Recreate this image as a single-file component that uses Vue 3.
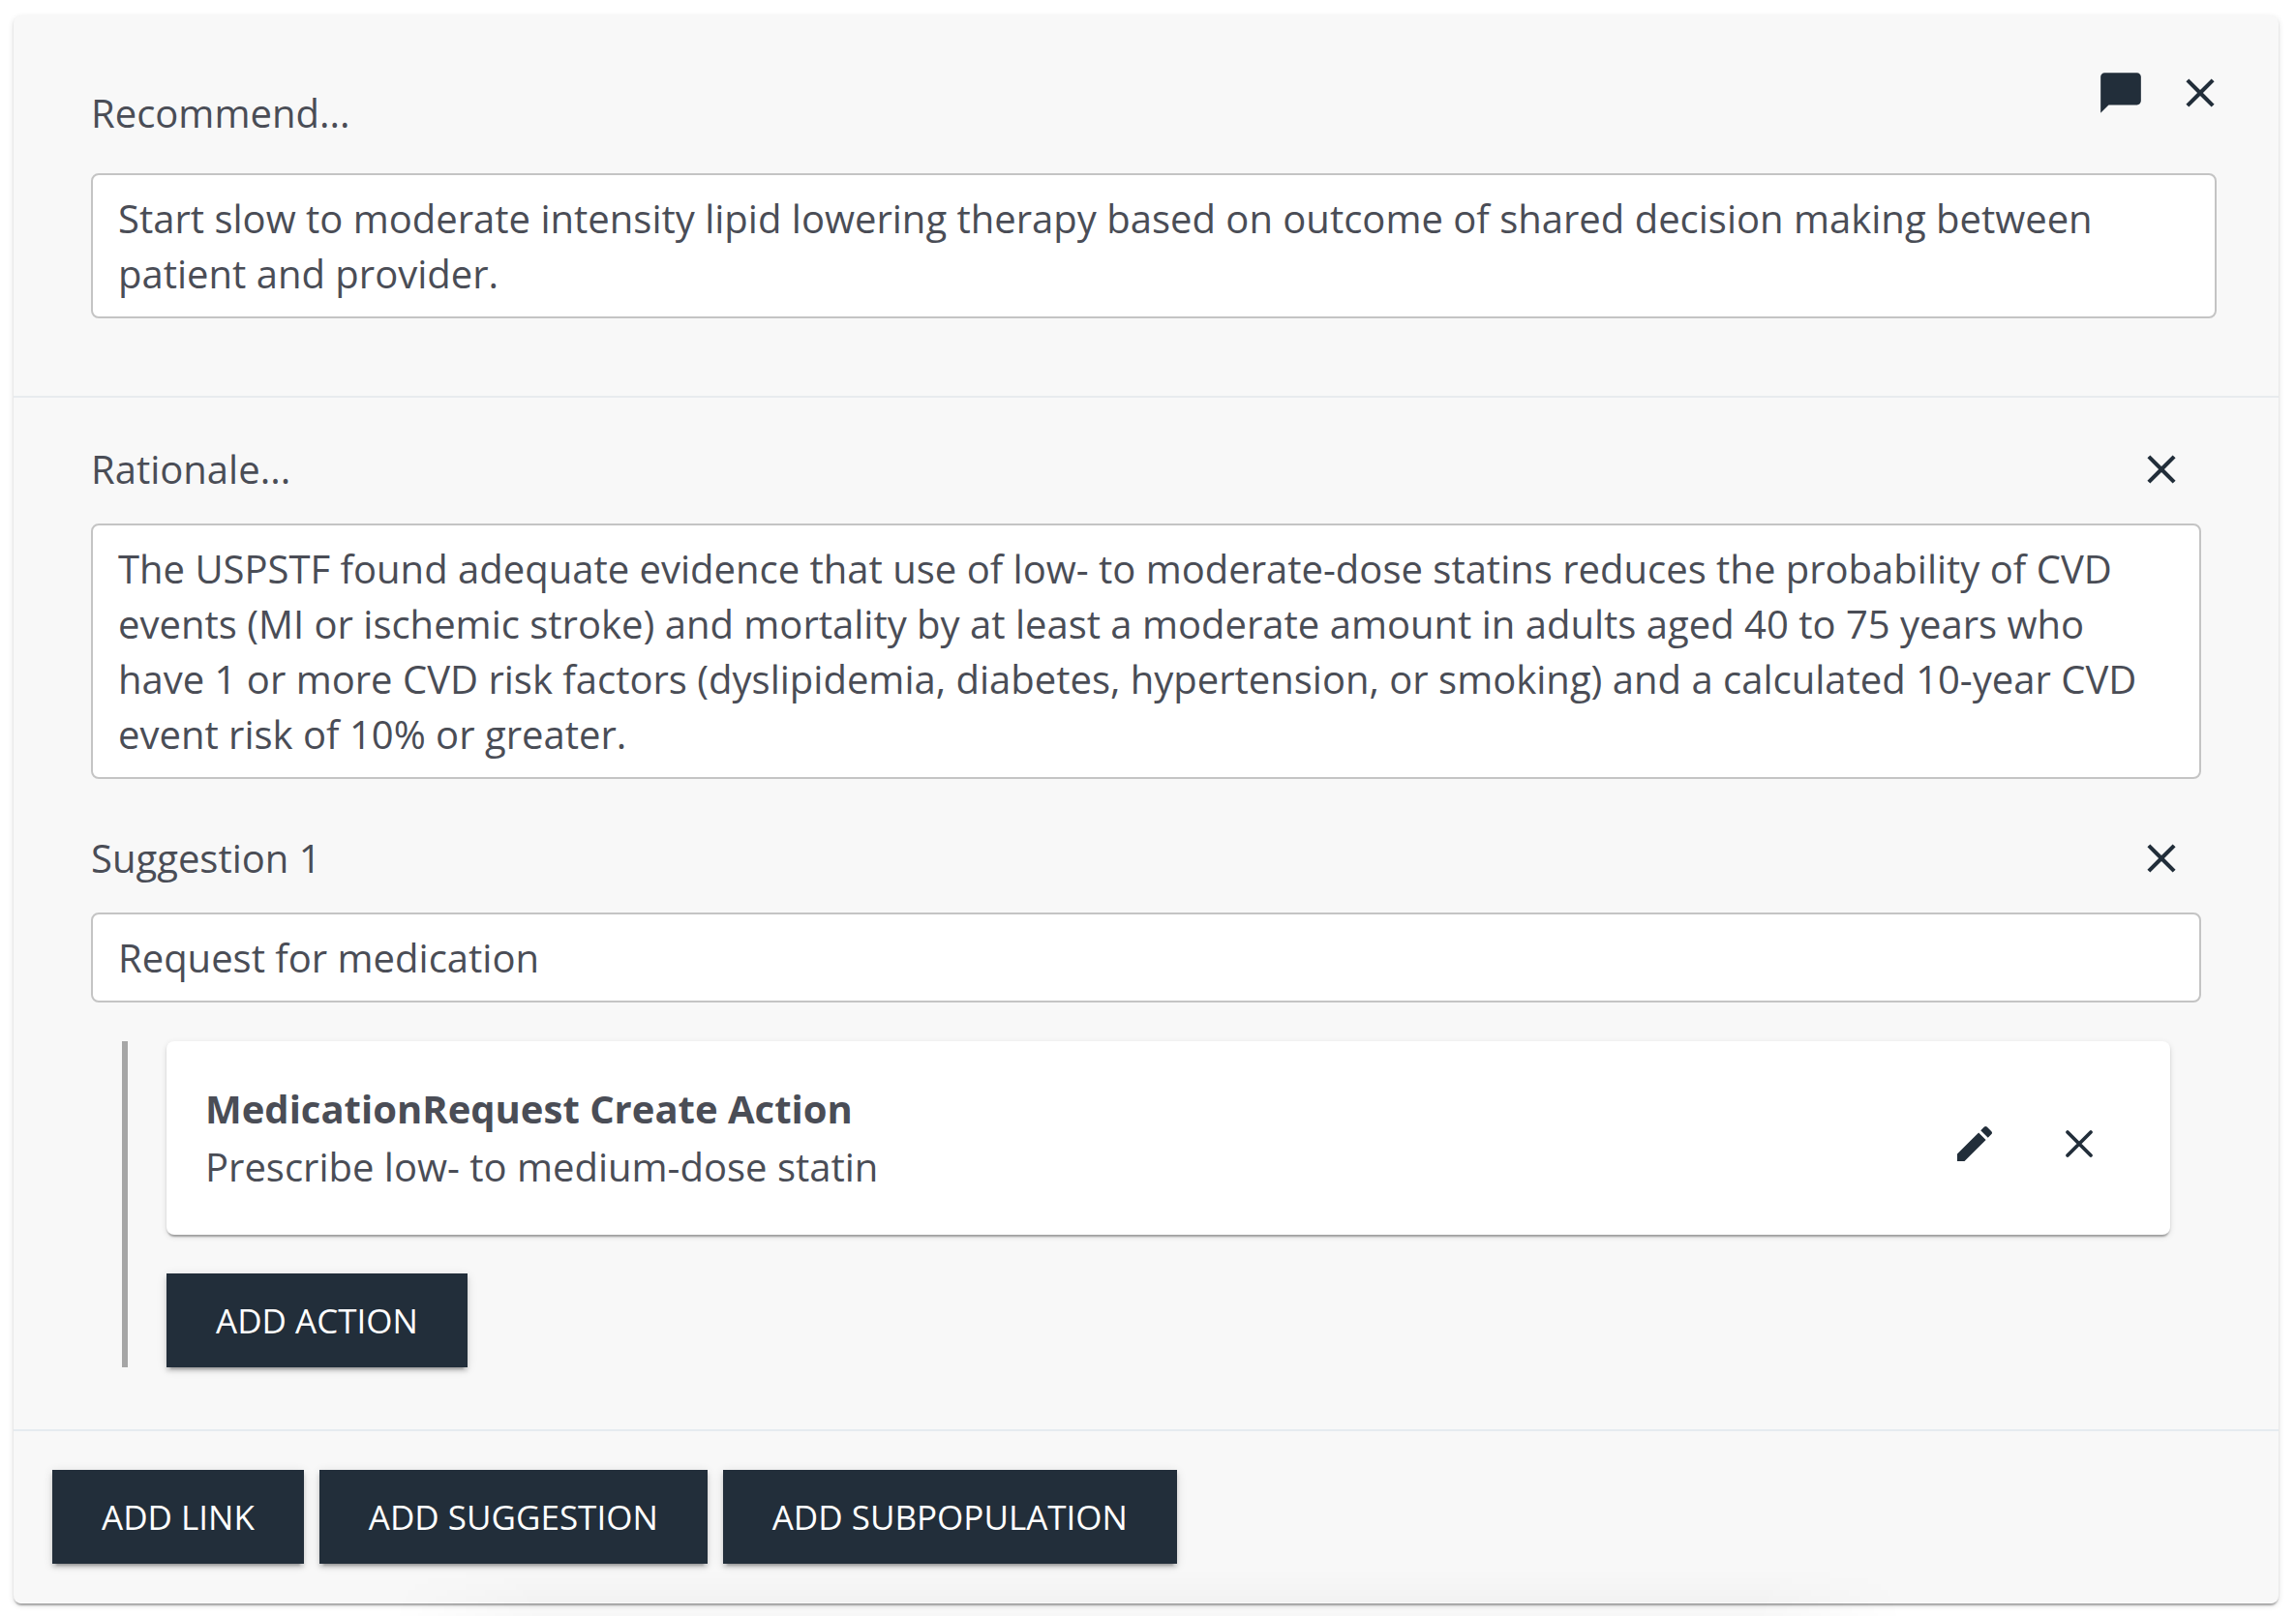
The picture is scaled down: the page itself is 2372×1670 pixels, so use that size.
<script setup>
import { ref } from 'vue'

const recommendation = ref('Start slow to moderate intensity lipid lowering therapy based on outcome of shared decision making between patient and provider.')
const rationale = ref('The USPSTF found adequate evidence that use of low- to moderate-dose statins reduces the probability of CVD events (MI or ischemic stroke) and mortality by at least a moderate amount in adults aged 40 to 75 years who have 1 or more CVD risk factors (dyslipidemia, diabetes, hypertension, or smoking) and a calculated 10-year CVD event risk of 10% or greater.')
const suggestion = ref('Request for medication')
const footerActions = ['Add link', 'Add suggestion', 'Add subpopulation']

const icons = {
  close: 'M19 6.41L17.59 5 12 10.59 6.41 5 5 6.41 10.59 12 5 17.59 6.41 19 12 13.41 17.59 19 19 17.59 13.41 12z',
  comment: 'M20 2H4c-1.1 0-2 .9-2 2v18l4-4h14c1.1 0 2-.9 2-2V4c0-1.1-.9-2-2-2z',
  edit: 'M3 17.25V21h3.75L17.81 9.94l-3.75-3.75L3 17.25zM20.71 7.04c.39-.39.39-1.02 0-1.41l-2.34-2.34c-.39-.39-1.02-.39-1.41 0l-1.83 1.83 3.75 3.75 1.83-1.83z',
}
</script>

<template>
  <main class="page">
    <article class="card">
      <section class="recommend">
        <div class="recommend-head">
          <label class="label" for="recommend">Recommend...</label>
          <div class="tools">
            <button class="icon-button" type="button" aria-label="Comment">
              <svg viewBox="0 0 24 24"><path :d="icons.comment" /></svg>
            </button>
            <button class="icon-button" type="button" aria-label="Delete recommendation">
              <svg viewBox="0 0 24 24"><path :d="icons.close" /></svg>
            </button>
          </div>
        </div>
        <textarea id="recommend" v-model="recommendation" class="field" rows="2"></textarea>
      </section>

      <section class="details">
        <div class="group">
          <div class="group-head">
            <label class="label" for="rationale">Rationale...</label>
            <button class="icon-button" type="button" aria-label="Delete rationale">
              <svg viewBox="0 0 24 24"><path :d="icons.close" /></svg>
            </button>
          </div>
          <textarea id="rationale" v-model="rationale" class="field" rows="4"></textarea>
        </div>

        <div class="group">
          <div class="group-head">
            <label class="label" for="suggestion">Suggestion 1</label>
            <button class="icon-button" type="button" aria-label="Delete suggestion">
              <svg viewBox="0 0 24 24"><path :d="icons.close" /></svg>
            </button>
          </div>
          <input id="suggestion" v-model="suggestion" class="field" type="text" />
        </div>

        <div class="actions">
          <div class="action-card">
            <div class="action-text">
              <h3 class="action-title">MedicationRequest Create Action</h3>
              <p class="action-description">Prescribe low- to medium-dose statin</p>
            </div>
            <div class="action-tools">
              <button class="icon-button" type="button" aria-label="Edit action">
                <svg viewBox="0 0 24 24"><path :d="icons.edit" /></svg>
              </button>
              <button class="icon-button" type="button" aria-label="Delete action">
                <svg viewBox="0 0 24 24"><path class="thin-cross" d="M6 6L18 18M18 6L6 18" /></svg>
              </button>
            </div>
          </div>
          <button class="button" type="button">Add action</button>
        </div>
      </section>

      <footer class="footer">
        <button v-for="name in footerActions" :key="name" class="button" type="button">{{ name }}</button>
      </footer>
    </article>
  </main>
</template>

<style>
body {
  background: #fff;
}
</style>

<style scoped>
* {
  box-sizing: border-box;
}

.page {
  position: relative;
  padding: 16px 18px 13px 14px;
  color: #4a4d56;
  font-family: 'Open Sans', 'Noto Sans', sans-serif;
  font-size: 40px;
  line-height: 57px;
}

/* faint shade rising from below the page edge */
.page::after {
  content: '';
  position: absolute;
  right: 17%;
  bottom: 0;
  left: 17%;
  height: 48px;
  background: linear-gradient(to top, rgba(0, 0, 0, 0.03), transparent);
  mask-image: linear-gradient(to right, transparent, #000 10%, #000 90%, transparent);
  pointer-events: none;
}

.card {
  border-radius: 8px;
  background: #f8f8f8;
  border-bottom: 1px solid #fff;
  box-shadow: 0 4px 2px -2px rgba(0, 0, 0, 0.2), 0 2px 2px rgba(0, 0, 0, 0.14), 0 2px 6px rgba(0, 0, 0, 0.12);
}

.recommend {
  padding: 55px 64px 80px 80px;
  border-bottom: 2px solid #e8ebee;
}

.recommend-head {
  display: flex;
  align-items: flex-end;
  justify-content: space-between;
  min-height: 74px;
  margin-bottom: 34px;
}

.tools {
  display: flex;
  align-self: flex-start;
  gap: 32px;
  margin-right: -8px;
}

.details {
  padding: 45px 80px 64px;
}

.group + .group {
  margin-top: 53px;
}

.group-head {
  display: flex;
  align-items: center;
  justify-content: space-between;
  margin-bottom: 28px;
  padding-right: 16px;
}

.label {
  display: block;
}

.icon-button {
  display: block;
  width: 50px;
  height: 50px;
  padding: 0;
  border: 0;
  background: none;
  cursor: pointer;
}

.icon-button svg {
  display: block;
  width: 100%;
  height: 100%;
  fill: #222e3a;
}

.icon-button .thin-cross {
  fill: none;
  stroke: #222e3a;
  stroke-width: 1.9;
  stroke-linecap: round;
}

.field {
  display: block;
  width: 100%;
  margin: 0;
  padding: 16px 26px;
  border: 2px solid #c4c4c4;
  border-radius: 8px;
  background: #fff;
  color: inherit;
  font: inherit;
  resize: none;
  overflow: hidden;
}

.actions {
  display: flex;
  flex-direction: column;
  align-items: flex-start;
  gap: 40px;
  margin: 40px 32px 0;
  padding-left: 40px;
  border-left: 6px solid #a6a6a6;
}

.action-card {
  display: flex;
  align-items: center;
  justify-content: space-between;
  width: 100%;
  padding: 40px 70px 40px 40px;
  border-radius: 8px;
  background: #fff;
  box-shadow: 0 4px 2px -2px rgba(0, 0, 0, 0.2), 0 2px 2px rgba(0, 0, 0, 0.14), 0 2px 6px rgba(0, 0, 0, 0.12);
}

.action-title,
.action-description {
  margin: 0;
  font-size: 40px;
  line-height: 60px;
}

.action-tools {
  display: flex;
  gap: 60px;
  padding-top: 12px;
}

.action-tools .icon-button {
  width: 48px;
  height: 48px;
}

.button {
  padding: 20px 51px;
  border: 0;
  background: #222e3a;
  box-shadow: 0 6px 2px -4px rgba(0, 0, 0, 0.2), 0 4px 4px rgba(0, 0, 0, 0.14), 0 2px 10px rgba(0, 0, 0, 0.12);
  color: #fff;
  font: inherit;
  font-size: 35px;
  text-transform: uppercase;
  cursor: pointer;
}

.footer {
  display: flex;
  flex-wrap: wrap;
  gap: 16px;
  padding: 40px;
  border-top: 2px solid #e5ebf0;
}
</style>
